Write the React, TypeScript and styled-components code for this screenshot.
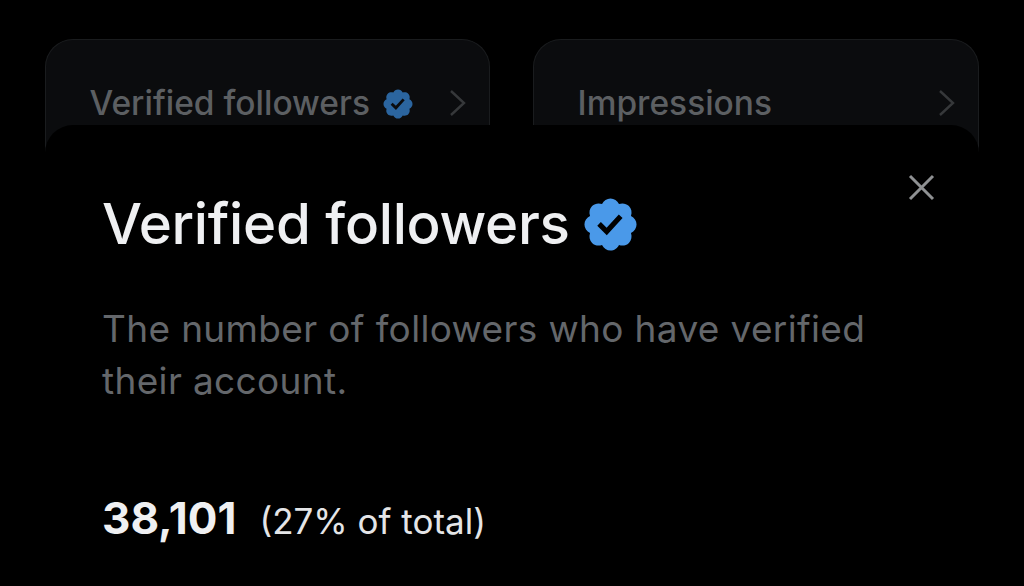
import React from 'react';
import styled, { createGlobalStyle } from 'styled-components';

const GlobalStyle = createGlobalStyle`
  html, body {
    margin: 0;
    padding: 0;
    background: #000;
  }
  body {
    font-family: Inter, "Liberation Sans", sans-serif;
    overflow: hidden;
  }
`;

const Page = styled.div`
  width: 1024px;
  height: 586px;
  box-sizing: border-box;
  padding: 39px 45px 0;
  background: #000;
  overflow: hidden;
`;

const CardRow = styled.div`
  display: grid;
  grid-template-columns: 445px 446px;
  column-gap: 43px;
`;

const Card = styled.div`
  height: 120px;
  box-sizing: border-box;
  padding: 44px 22px 0 43.5px;
  display: flex;
  align-items: flex-start;
  background: #0b0c0e;
  border: 1.5px solid #1a1c1e;
  border-bottom: none;
  border-radius: 28px 28px 0 0;
`;

const CardLabel = styled.span`
  font-size: 33.5px;
  line-height: 38px;
  font-weight: 500;
  color: #5c5f62;
  white-space: nowrap;
`;

const CardBadge = styled.svg`
  width: 34px;
  height: 34px;
  margin: 3px 0 0 11px;
  flex: none;
`;

const Chevron = styled.svg`
  width: 18px;
  height: 28px;
  margin: 5px 0 0 auto;
  flex: none;
`;

const Sheet = styled.section`
  position: relative;
  width: 934px;
  height: 500px;
  margin-top: -34px;
  box-sizing: border-box;
  padding: 60px 57px 0;
  background: #000;
  border-radius: 28px 28px 0 0;
`;

const CloseButton = styled.svg`
  position: absolute;
  top: 49px;
  right: 44px;
  width: 27px;
  height: 27px;
`;

const TitleRow = styled.div`
  display: flex;
  align-items: center;
`;

const Title = styled.h1`
  margin: 0;
  font-size: 56.5px;
  line-height: 78px;
  font-weight: 500;
  letter-spacing: -0.3px;
  color: #eff0f2;
  white-space: nowrap;
`;

const TitleBadge = styled.svg`
  width: 61px;
  height: 61px;
  margin-left: 10px;
  flex: none;
`;

const Description = styled.p`
  margin: 40px 0 0;
  width: 790px;
  font-size: 37px;
  line-height: 52px;
  font-weight: 400;
  letter-spacing: 0.35px;
  color: #64676b;
`;

const Stats = styled.div`
  display: flex;
  align-items: baseline;
  margin-top: 86px;
`;

const Count = styled.span`
  font-size: 44px;
  line-height: 50px;
  font-weight: 700;
  color: #eff0f2;
`;

const Share = styled.span`
  margin-left: 23px;
  font-size: 35px;
  line-height: 50px;
  color: #e4e5e7;
`;

const badgePath =
  'M22.25 12c0-1.43-.88-2.67-2.19-3.34.46-1.39.2-2.9-.81-3.91s-2.52-1.27-3.91-.81c-.66-1.31-1.91-2.19-3.34-2.19s-2.67.88-3.33 2.19c-1.4-.46-2.91-.2-3.92.81s-1.26 2.52-.8 3.91c-1.31.67-2.2 1.91-2.2 3.34s.89 2.67 2.2 3.34c-.46 1.39-.21 2.9.8 3.91s2.52 1.26 3.91.81c.67 1.31 1.91 2.19 3.34 2.19s2.68-.88 3.34-2.19c1.39.45 2.9.2 3.91-.81s1.27-2.52.81-3.91c1.31-.67 2.19-1.91 2.19-3.34zm-11.71 4.2L6.8 12.46l1.41-1.42 2.26 2.26 4.8-5.23 1.47 1.36-6.2 6.77z';

const App = () => {
  return (
    <Page>
      <GlobalStyle />
      <CardRow>
        <Card>
          <CardLabel>Verified followers</CardLabel>
          <CardBadge viewBox="0 0 24 24">
            <path d={badgePath} fill="#2b659f" />
          </CardBadge>
          <Chevron viewBox="0 0 18 28" fill="none">
            <path d="M2 2l13 12L2 26" stroke="#36383a" strokeWidth="2.4" />
          </Chevron>
        </Card>
        <Card>
          <CardLabel>Impressions</CardLabel>
          <Chevron viewBox="0 0 18 28" fill="none">
            <path d="M2 2l13 12L2 26" stroke="#36383a" strokeWidth="2.4" />
          </Chevron>
        </Card>
      </CardRow>
      <Sheet>
        <CloseButton viewBox="0 0 27 27" fill="none">
          <path d="M2 2l23 23M25 2L2 25" stroke="#8f9193" strokeWidth="3" />
        </CloseButton>
        <TitleRow>
          <Title>Verified followers</Title>
          <TitleBadge viewBox="0 0 24 24">
            <path d={badgePath} fill="#4a99e9" />
          </TitleBadge>
        </TitleRow>
        <Description>
          The number of followers who have verified their account.
        </Description>
        <Stats>
          <Count>38,101</Count>
          <Share>(27% of total)</Share>
        </Stats>
      </Sheet>
    </Page>
  );
};

export default App;
